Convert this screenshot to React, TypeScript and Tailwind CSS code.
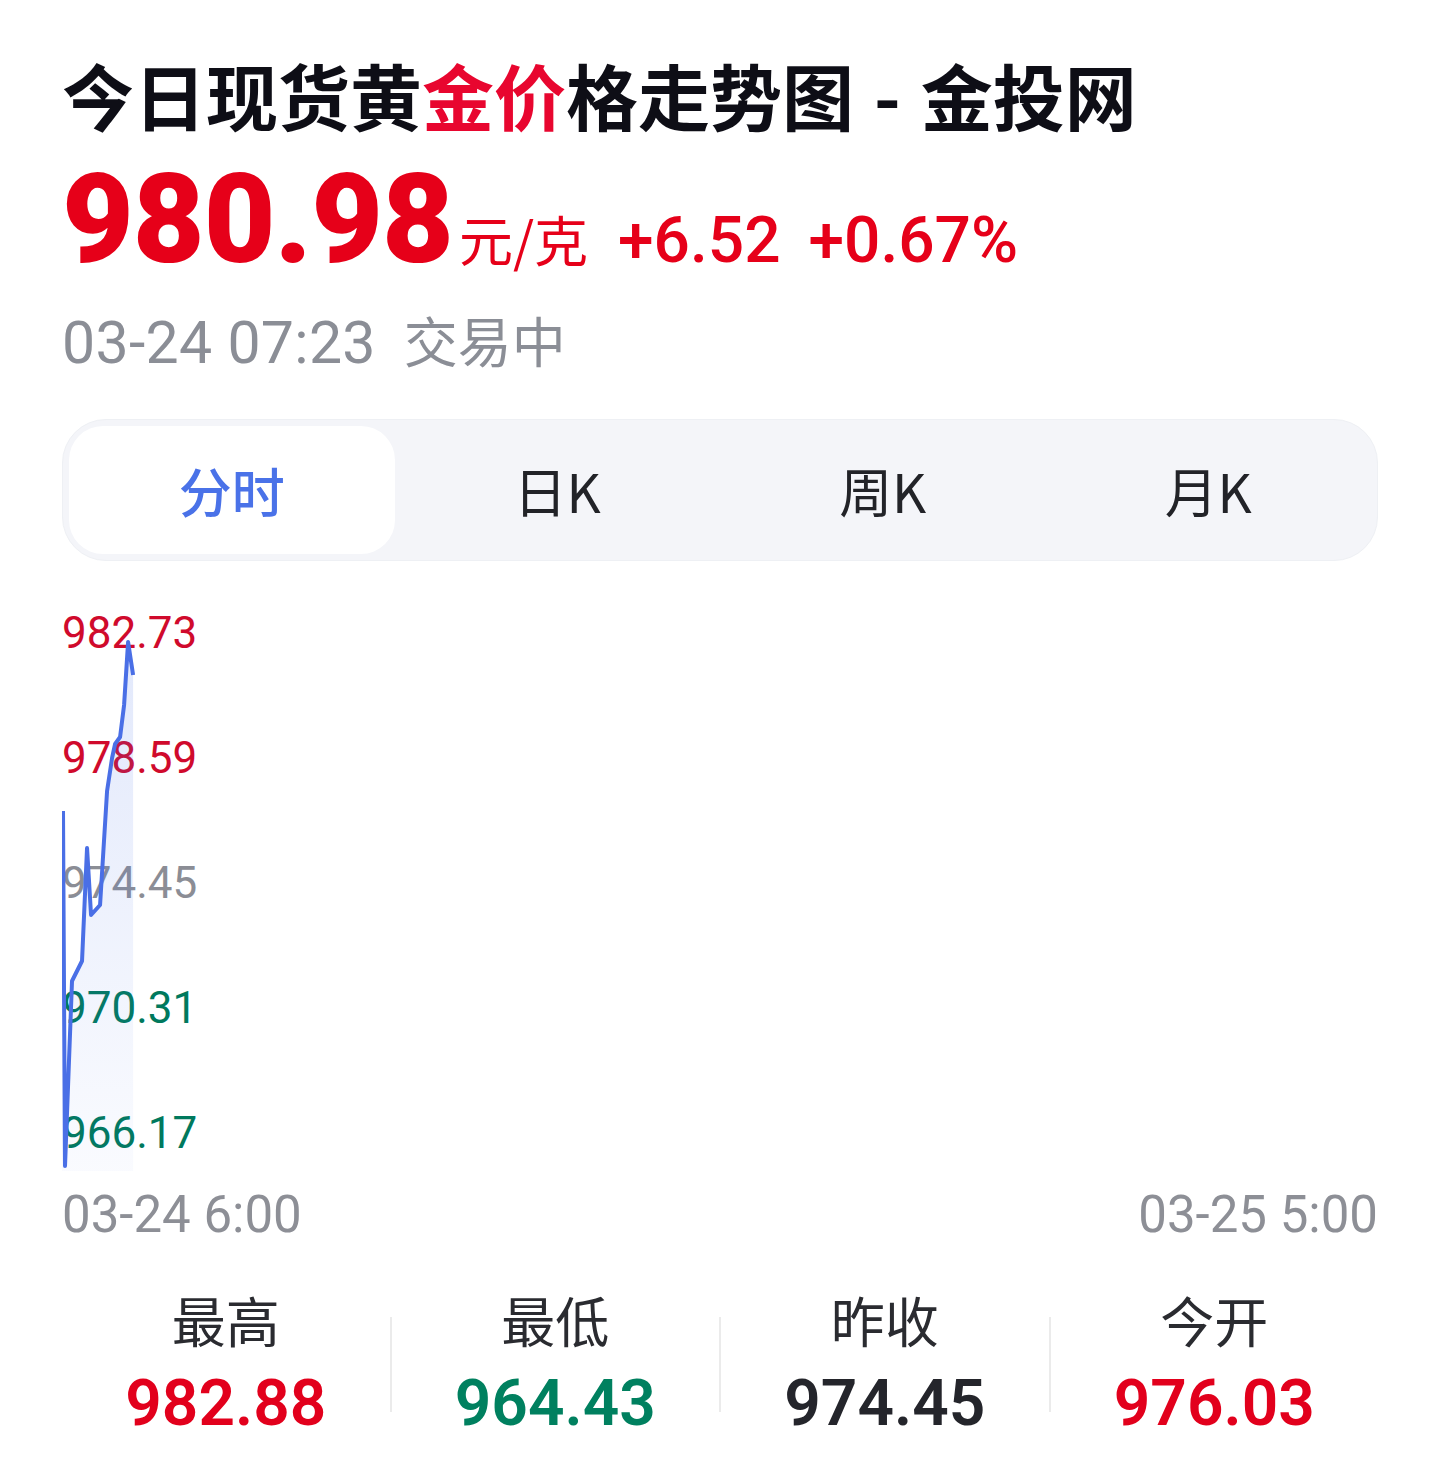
import React, { useState } from 'react'

const NUM = "font-['Roboto','Liberation_Sans',sans-serif]"
const CJK = "font-['Noto_Sans_CJK_SC','Noto_Sans',sans-serif]"

const tabs = ['分时', '日K', '周K', '月K']

const axis = [
  { v: '982.73', c: 'text-[#d00a2c]' },
  { v: '978.59', c: 'text-[#d00a2c]' },
  { v: '974.45', c: 'text-[#8b8d95]' },
  { v: '970.31', c: 'text-[#00795d]' },
  { v: '966.17', c: 'text-[#00795d]' },
]

const stats = [
  { name: '最高', value: '982.88', color: 'text-[#e2001c]' },
  { name: '最低', value: '964.43', color: 'text-[#00805f]' },
  { name: '昨收', value: '974.45', color: 'text-[#24252b]' },
  { name: '今开', value: '976.03', color: 'text-[#e2001c]' },
]

// minute line, px inside the chart box
const line: [number, number][] = [
  [1, 210], [3, 565], [10, 380], [20, 360], [25, 247], [29, 314], [38, 304],
  [45, 190], [50, 157], [53, 143], [58, 136], [62, 104], [66, 41], [71, 74],
]

const Chart: React.FC = () => {
  const pts = line.map(([x, y]) => `${x},${y}`).join(' ')
  const area = `0,570 ${pts} 71,570`
  return (
    <div className="relative mt-[40px] h-[570px]">
      <div className={`flex flex-col gap-[81px] pt-[10px] ${NUM}`}>
        {axis.map((a) => (
          <span key={a.v} className={`text-[44px] leading-none ${a.c}`}>
            {a.v}
          </span>
        ))}
      </div>
      <svg className="absolute inset-0 h-full w-full" viewBox="0 0 1314 570" preserveAspectRatio="none">
        <defs>
          <linearGradient id="fill" x1="0" y1="0" x2="0" y2="1">
            <stop offset="0" stopColor="#4a72e8" stopOpacity="0.16" />
            <stop offset="1" stopColor="#4a72e8" stopOpacity="0.03" />
          </linearGradient>
        </defs>
        <polygon points={area} fill="url(#fill)" />
        <polyline points={pts} fill="none" stroke="#4a6fe6" strokeWidth="4" strokeLinejoin="round" />
      </svg>
    </div>
  )
}

const App: React.FC = () => {
  const [active, setActive] = useState(0)

  return (
    <div className="min-h-screen w-full bg-white pl-[62px] pr-[58px] pt-[58px] pb-[40px]">
      {/* title */}
      <h1 className={`text-[72px] font-bold leading-none text-[#0e0e16] ${CJK}`}>
        今日现货黄<span className="text-[#e8062f]">金价</span>格走势图<span className="mx-[20px]">-</span>金投网
      </h1>

      {/* price */}
      <div className="mt-[28px] flex items-baseline">
        <span className={`text-[124px] font-black leading-none tracking-[-1px] text-[#e60019] ${NUM}`}>980.98</span>
        <span className={`ml-[6px] text-[54px] leading-none text-[#e60019] ${CJK}`}>元/克</span>
        <span className={`ml-[30px] text-[64px] font-medium leading-none text-[#e60019] ${NUM}`}>+6.52</span>
        <span className={`ml-[28px] text-[64px] font-medium leading-none text-[#e60019] ${NUM}`}>+0.67%</span>
      </div>

      {/* time */}
      <div className={`mt-[31px] flex items-baseline text-[59px] leading-none text-[#8b8e96] ${NUM}`}>
        <span className="tracking-[0.3px]">03-24 07:23</span>
        <span className={`ml-[28px] text-[54px] ${CJK}`}>交易中</span>
      </div>

      {/* tabs */}
      <div className="mt-[47px] flex rounded-[44px] border border-[#eef0f4] bg-[#f4f5f9] p-[6px]">
        {tabs.map((t, i) => (
          <button
            key={t}
            onClick={() => setActive(i)}
            className={`flex h-[128px] flex-1 items-center justify-center rounded-[34px] text-[53px] leading-none ${CJK} ${
              active === i ? 'bg-white font-medium text-[#4a72e8]' : 'text-[#222328]'
            }`}
          >
            {t}
          </button>
        ))}
      </div>

      <Chart />

      {/* x axis */}
      <div className={`mt-[18px] flex justify-between text-[51px] leading-none text-[#8d8f96] ${NUM}`}>
        <span>03-24 6:00</span>
        <span>03-25 5:00</span>
      </div>

      {/* stats */}
      <div className="mt-[53px] flex">
        {stats.map((s, i) => (
          <React.Fragment key={s.name}>
            {i > 0 && <div className="h-[95px] w-[2px] self-center bg-[#ebebeb]" />}
            <div className="flex flex-1 flex-col items-center">
              <span className={`text-[54px] leading-none text-[#2a2b30] ${CJK}`}>{s.name}</span>
              <span className={`mt-[25px] text-[64px] font-semibold leading-none ${s.color} ${NUM}`}>{s.value}</span>
            </div>
          </React.Fragment>
        ))}
      </div>
    </div>
  )
}

export default App
